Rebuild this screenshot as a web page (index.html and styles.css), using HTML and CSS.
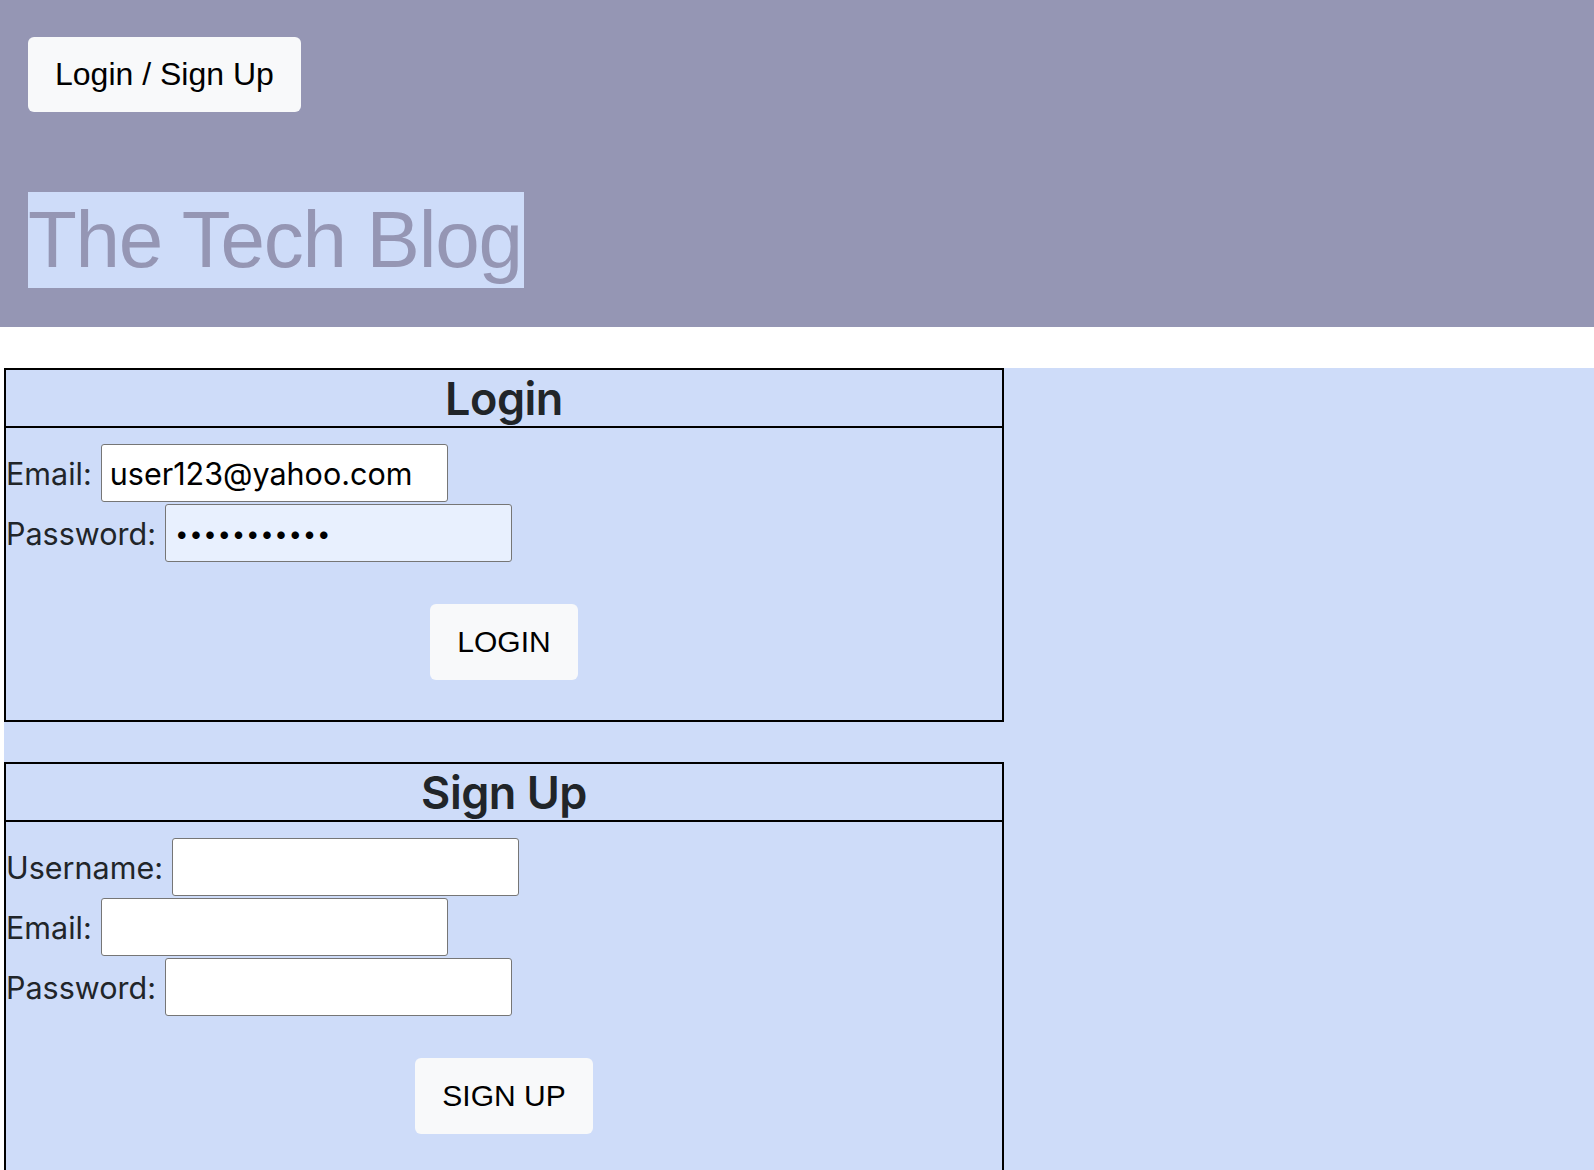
FILE: index.html
```html
<!DOCTYPE html>
<html lang="en">
<head>
<meta charset="utf-8">
<title>The Tech Blog</title>
<link rel="stylesheet" href="styles.css">
</head>
<body>
<header class="site-header">
  <button class="btn btn-top" type="button">Login / Sign Up</button>
  <h1 class="site-title"><span class="title-mark">The Tech Blog</span></h1>
</header>
<main class="page">
  <section class="card">
    <h2 class="card-title">Login</h2>
    <form class="card-body">
      <div class="row"><label class="lbl" for="le">Email:</label><input class="field" id="le" type="email" value="user123@yahoo.com"></div>
      <div class="row"><label class="lbl" for="lp">Password:</label><input class="field field-fill" id="lp" type="password" value="password123"></div>
      <div class="actions"><button class="btn btn-act" type="button">LOGIN</button></div>
    </form>
  </section>
  <section class="card">
    <h2 class="card-title">Sign Up</h2>
    <form class="card-body">
      <div class="row"><label class="lbl" for="su">Username:</label><input class="field" id="su" type="text"></div>
      <div class="row"><label class="lbl" for="se">Email:</label><input class="field" id="se" type="email"></div>
      <div class="row"><label class="lbl" for="sp">Password:</label><input class="field" id="sp" type="password"></div>
      <div class="actions"><button class="btn btn-act" type="button">SIGN UP</button></div>
    </form>
  </section>
</main>
</body>
</html>
```

FILE: styles.css
```css
* { box-sizing: border-box; }
html, body { margin: 0; padding: 0; }
body {
  background: #ffffff;
  font-family: Inter, "Noto Sans", sans-serif;
  color: #212529;
}
.site-header {
  background: #9596b4;
  height: 327px;
  padding: 37px 0 0 28px;
  display: flex;
  flex-direction: column;
  align-items: flex-start;
}
.btn {
  font-family: "Liberation Sans", Arial, sans-serif;
  color: #000;
  background: #f8f9fa;
  border: none;
  border-radius: 6px;
  cursor: pointer;
}
.btn-top {
  font-size: 32px;
  height: 75px;
  padding: 0 27px;
}
.site-title {
  margin: 80px 0 0 0;
  font-family: "Liberation Sans", Arial, sans-serif;
  font-weight: 400;
  font-size: 80px;
  line-height: 96px;
  color: #9596b4;
  letter-spacing: -1.25px;
}
.title-mark {
  background: #cedcf9;
  display: inline-block;
  padding-right: 2px;
}
.page {
  margin: 41px 0 0 4px;
  background: #cedcf9;
  min-height: 900px;
  padding-bottom: 40px;
}
.card {
  width: 1000px;
  border: 2px solid #000;
  margin-bottom: 40px;
}
.card-title {
  margin: 0;
  height: 58px;
  padding-top: 2px;
  border-bottom: 2px solid #000;
  text-align: center;
  font-size: 45px;
  font-weight: 600;
  line-height: 54px;
  letter-spacing: -0.5px;
  color: #212529;
}
.card-body {
  padding: 16px 0 0 0;
  margin: 0;
}
.row {
  display: flex;
  align-items: center;
  gap: 9px;
  margin-bottom: 2px;
}
.lbl {
  font-size: 30.5px;
  color: #212529;
}
.field {
  width: 347px;
  height: 58px;
  border: 1px solid #767676;
  border-radius: 3px;
  background: #fff;
  padding: 0 8px;
  font-family: Inter, "Noto Sans", sans-serif;
  font-size: 30.5px;
  color: #000;
}
.field-fill {
  background: #e8f0fe;
  padding-left: 9px;
  font-size: 24px;
  letter-spacing: 0.7px;
}
.actions {
  display: flex;
  justify-content: center;
  padding: 40px 0 40px 0;
}
.btn-act {
  font-size: 30px;
  height: 76px;
  padding: 0 27px;
}
```
